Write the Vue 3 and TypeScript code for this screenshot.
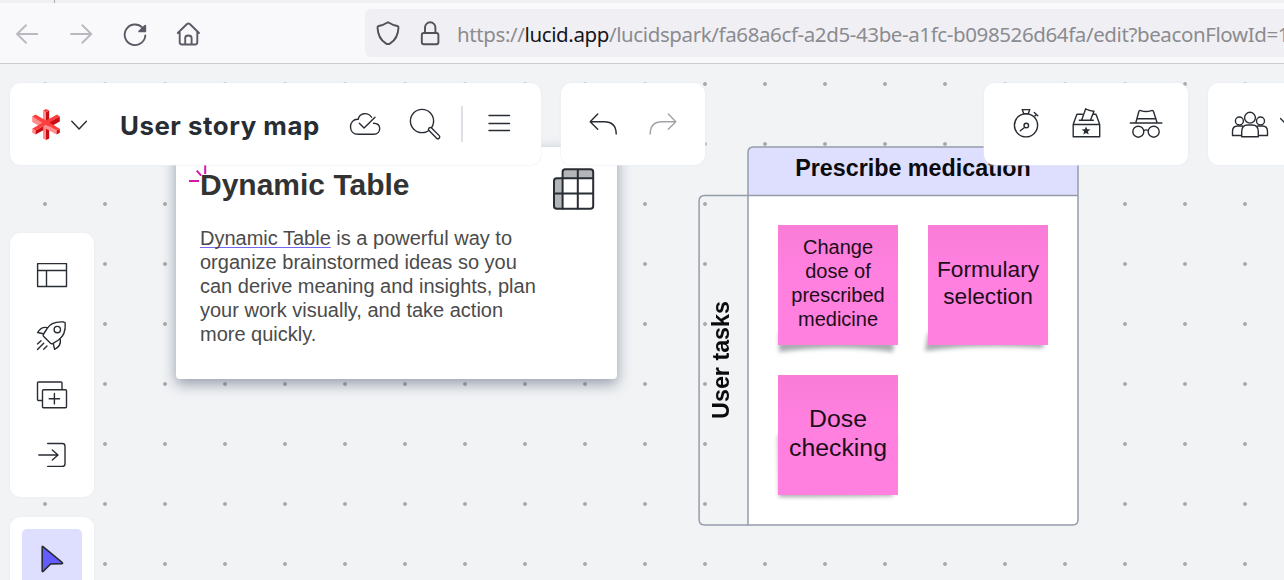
<script setup lang="ts">
interface Sticky {
  lines: string[]
  variant: string
}

const stickies: Sticky[] = [
  { lines: ['Change', 'dose of', 'prescribed', 'medicine'], variant: 'small' },
  { lines: ['Formulary', 'selection'], variant: 'medium' },
  { lines: ['Dose', 'checking'], variant: 'large' },
]

const shadows: string[] = [
  'M1 108 H117 L115 127 Q60 119 1 127 Z',
  'M0 108 H118 L115 123 Q50 119 -3 126 Z',
  'M0 60 H118 L115 121 Q60 122 1 122 Z',
]

const cardLines: string[] = [
  'organize brainstormed ideas so you',
  'can derive meaning and insights, plan',
  'your work visually, and take action',
  'more quickly.',
]
</script>

<template>
  <div class="window">
    <div class="tabstrip"><span class="tab-edge"></span></div>
    <header class="browser">
      <svg class="nav" width="365" height="60" viewBox="0 3 365 60">
        <g class="muted">
          <path d="M37.3 34H17M26 25.2L17 34l9 8.8" />
          <path d="M71 34h20.3M82.3 25.2L91.3 34l-9 8.8" />
        </g>
        <g class="chrome">
          <path d="M145.3 35.5A10.3 10.3 0 1 1 142.4 27.6" />
          <path class="solid" d="M145.2 25.8v5.6h-6z" />
          <path d="M177.8 33L187 24q1.4-1.2 2.8 0l9.2 9M179.7 32v10.3q0 2.2 2.2 2.2h13.2q2.2 0 2.2-2.2V32M185.2 44v-6q0-2.5 3.2-2.5t3.2 2.5v6" />
        </g>
      </svg>
      <div class="address">
        <svg width="92" height="48" viewBox="365 9 92 48" class="chrome dark">
          <path d="M388 22.3q4.8 3 9.4 3.7q1.2.3 1.1 1.6c-.4 8-2.7 12.300-8.300 15.800q-2.200 1.400-4.400 0c-5.600-3.500-7.900-7.800-8.300-15.800q-.1-1.300 1.100-1.600q4.600-.7 9.400-3.700z" />
          <rect x="421.800" y="33" width="16.600" height="11.300" rx="2" />
          <path d="M425 33v-5.500a5.200 5.200 0 0 1 10.400 0V33" />
        </svg>
        <span class="url">https://<b>lucid.app</b>/lucidspark/fa68a6cf-a2d5-43be-a1fc-b098526d64fa/edit?beaconFlowId=1</span>
      </div>
    </header>

    <main class="canvas">
      <section class="card">
        <h2>Dynamic Table</h2>
        <p><span class="link">Dynamic Table</span> is a powerful way to<template v-for="line in cardLines" :key="line"><br />{{ line }}</template></p>
        <svg class="grid-icon" width="44" height="44" viewBox="552 167 44 44">
          <path class="shade" d="M563 178v-6q0-2.500 2.500-2.500h25q2.500 0 2.500 2.500v6zM563 178h-6q-2.800 0-2.800 2.500v25.500q0 3 2.800 3h6z" />
          <path d="M562.600 178.200v-6.200q0-2.700 2.700-2.700h25.200q2.700 0 2.700 2.700v34q0 2.800-2.700 2.800h-33.700q-2.800 0-2.800-2.800v-25q0-2.800 2.800-2.800h36.400M554 193.400h39.200M562.600 178v31M577.800 169.300v39.700" />
        </svg>
        <svg class="spark" width="20" height="20" viewBox="188 164 20 20">
          <path d="M205.200 164v10M196.700 170.700l4.500 5M189 181h10" />
        </svg>
      </section>

      <section class="board">
        <svg class="frame" width="382" height="381" viewBox="698 146 382 381">
          <path class="head-fill" d="M748 195.500v-43q0-5.500 5.500-5.500h319q5.500 0 5.500 5.500v43z" />
          <path class="body-fill" d="M748 195.500h330v324q0 5.500-5.500 5.500H748z" />
          <path d="M748 525V152.500q0-5.500 5.500-5.500h319q5.500 0 5.500 5.500v367q0 5.500-5.500 5.500H704.600q-5.500 0-5.500-5.500v-318.500q0-5.500 5.500-5.500H1078" />
        </svg>
        <h3>Prescribe medication</h3>
        <div class="row-label"><span>User tasks</span></div>
        <div class="notes">
          <article v-for="(note, i) in stickies" :key="i" class="note" :class="note.variant">
            <svg class="curl" width="120" height="120" viewBox="0 0 120 120"><path :d="shadows[i]" /></svg>
            <div class="paper"><span v-for="line in note.lines" :key="line">{{ line }}</span></div>
          </article>
        </div>
      </section>

      <nav class="panel document">
        <svg class="logo" width="32" height="60" viewBox="30 95 32 60">
          <path fill="#ff8f8f" d="M43 110.500l3 1.700V124l-3-1.700zM43 124l3-1.500v17.500l-3-1.500zM32.200 116.500l11.300 6.200v2.600l-3.300 1.300-8-4.600z" />
          <path fill="#c80d14" d="M46 112.200l3.200-1.700v12L46 124zM46 123l3.200 1.500v14L46 140zM48.500 122.200l11.300-5.700v5l-7.600 4.200-3.700-1.700z" />
          <path fill="#ff3f3f" d="M43 110.500l3-1.600 3.200 1.600-3.200 1.700zM32.200 116.500l3.300-1.900L46 120.400l-2.500 3zM57 114.600l2.800 1.900-10.500 6.200-3.300-2.300z" />
          <path fill="#ff8f8f" d="M32.200 128.800l3.300 1.800v4l-3.300-1.800zM46 124.600l10.600 5.800v4.200L46 128.800z" />
          <path fill="#c80d14" d="M35.500 130.600L46 124.600v4.200l-10.500 5.800zM56.600 130.400l3.200-1.600v4l-3.200 1.800z" />
          <path fill="#ff8f8f" d="M43.300 130.200l2.700-1.500v-4.100l-2.700 1.600z" />
          <path fill="#ff3f3f" d="M32.200 128.800L46 120.500l13.800 8.300-3.200 1.700L46 124.600l-10.500 6z" />
        </svg>
        <svg width="36" height="60" viewBox="62 95 36 60" class="ink"><path d="M71.800 121.300l7.300 7.700 7.300-7.700" /></svg>
        <h1>User story map</h1>
        <svg width="60" height="60" viewBox="335 95 60 60" class="ink">
          <path d="M371.500 117.200C367.500 111.600 359.500 113 358.200 119.300C353.300 119 350.500 122.700 350.500 126.700C350.500 131.200 353.500 134.200 358 134.200H373.800C377.500 134.200 379.700 131.500 379.700 128.500C379.700 125.200 377.200 123.200 373.500 123.200M359.300 123.300l4.800 4.800L375 117.300" />
        </svg>
        <svg width="60" height="60" viewBox="395 95 60 60" class="ink">
          <circle cx="422" cy="121" r="11.600" />
          <path d="M430.300 129.300L437.900 136.900" stroke-width="5" class="handle" /><path d="M430.300 129.300L437.900 136.900" class="hollow" />
        </svg>
        <span class="divider"></span>
        <svg width="60" height="60" viewBox="469 95 60 60" class="ink"><path d="M489 115.500h20.500M489 123.500h20.500M489 130.500h20.500" /></svg>
      </nav>

      <nav class="panel history">
        <svg width="60" height="60" viewBox="573 95 60 60" class="ink"><path d="M597.700 114l-7.500 7.700 7.500 7.600M590.200 121.700H604C611.500 121.700 616.200 125 616.200 134" /></svg>
        <svg width="60" height="60" viewBox="633 95 60 60" class="ink faded"><path d="M668.300 114l7.500 7.700-7.500 7.600M675.800 121.700H662C654.500 121.700 650.200 125 650.200 134" /></svg>
      </nav>

      <nav class="panel facilitate">
        <svg width="60" height="60" viewBox="996 95 60 60" class="ink">
          <circle cx="1026" cy="125.300" r="11.600" /><circle cx="1026.300" cy="125.500" r="2.300" />
          <path d="M1024.500 127.500l-4.200 3.300M1022.200 109.600h7.600l-1.500 4h-4.600zM1034.300 112.500l3.500 3.300M1036.400 114.200l-1.500 1.800" />
        </svg>
        <svg width="60" height="60" viewBox="1056 95 60 60" class="ink">
          <path d="M1073.200 124.500h26.500v12.300h-26.500zM1073.200 124.500l3.300-9.300q.3-1 1.300-1h4.500M1099.700 124.500l-3.300-9.300q-.3-1-1.300-1h-1.600M1079.300 120.300h14M1081.600 120.300l4.100-11.500q2 1.600 8.300 2.500l-3.600 9" />
          <path class="star" d="M1086 126.400l1.200 2.900 3.200.2-2.500 2 .8 3.100-2.700-1.700-2.700 1.700.8-3.100-2.500-2 3.200-.2z" />
        </svg>
        <svg width="60" height="60" viewBox="1116 95 60 60" class="ink">
          <path d="M1130.300 123h31.500M1135.800 122.800l3-11q.4-1.600 2-1.200q5.200 1.900 10.600 0q1.700-.5 2.200 1.200l3.500 11M1137.300 118.700h18.700M1143.800 130.500q2.200-1.200 4.400 0" />
          <circle cx="1138.300" cy="131.700" r="5.500" /><circle cx="1153.700" cy="131.700" r="5.500" />
        </svg>
      </nav>

      <nav class="panel people">
        <svg width="60" height="60" viewBox="1220 95 60 60" class="ink">
          <circle cx="1250" cy="117.700" r="5.400" /><circle cx="1239.400" cy="121" r="4" /><circle cx="1260.500" cy="121" r="4" />
          <path d="M1241.700 136.800v-5.300q0-6.500 6-6.500h4.600q6 0 6 6.500v5.300zM1241.700 135.500h-9.200v-4q0-5.500 5-5.500h4.700M1258.300 135.500h9.200v-4q0-5.500-5-5.500h-4.700" />
        </svg>
        <svg width="16" height="60" viewBox="1280 95 16 60" class="ink"><path d="M1280.500 118.500l7 7 7-7" /></svg>
      </nav>

      <nav class="panel side">
        <svg width="60" height="60" viewBox="22 245 60 60" class="ink"><path d="M37.600 263.600h28.900v22.900H37.600zM37.600 270.500h28.900M46.500 270.500v16" /></svg>
        <svg width="60" height="60" viewBox="22 305 60 60" class="ink">
          <path d="M64 322C56 321.400 49.500 324 46.800 329L43.300 334.500Q42.800 335.600 43.700 336.500L50.300 343Q51.400 344.200 52.700 343.600L58.500 340C63.600 336.500 65.700 330 65.200 323Q65.100 322 64 322ZM47.500 327.700C42.500 326.300 39.800 329 37.600 332.500L43.300 333.700M53.300 343.700L54.600 349.300C58.800 347.300 61 343.500 60.300 339M41 340.700l-3.500 3.200M43.700 343.300l-6.200 6.200M47 346l-3.300 3.300" />
          <circle cx="57.300" cy="329.600" r="3.200" />
        </svg>
        <svg width="60" height="60" viewBox="22 365 60 60" class="ink"><path d="M42 400.500h-3.500q-1 0-1-1v-16.500q0-1 1-1h22.500q1 0 1 1v6.500M43.500 389.700h22q1 0 1 1v16q0 1-1 1h-22q-1 0-1-1v-16q0-1 1-1zM54.400 393.500v10.400M49.200 398.700h10.400" /></svg>
        <svg width="60" height="60" viewBox="22 425 60 60" class="ink"><path d="M47.700 443.500h14.600q2.700 0 2.700 2.700v17.500q0 2.700-2.700 2.700H47.700M38.800 455H58M52.300 450l5.700 5-5.700 5" /></svg>
      </nav>

      <nav class="panel tools">
        <div class="active">
          <svg width="60" height="60" viewBox="22 529 60 60"><path class="pointer" d="M42.200 547q0-1 .8-.4L62.300 562.700q.8.800-.3.900L50.600 564l-7.500 7.400q-.9.600-.9-.5z" /></svg>
        </div>
      </nav>
    </main>
  </div>
</template>

<style>
html, body { overflow: hidden; }
</style>

<style scoped>
.window {
  width: 1284px; height: 580px; overflow: hidden; display: flex; flex-direction: column;
  font-family: "Liberation Sans", Arial, sans-serif;
}
.window * { box-sizing: border-box; }
svg { display: block; flex: none; fill: none; stroke-linecap: round; stroke-linejoin: round; }
h1, h2, h3, p { margin: 0; }
.tabstrip { height: 3px; flex: none; background: #f0f0f0; }
.tab-edge { display: block; width: 1px; height: 3px; margin-left: 54px; background: #aaa; }
.browser { height: 61px; flex: none; display: flex; background: #f9f9fb; border-bottom: 1px solid #ccccce; }
.chrome { stroke: #5b5b66; stroke-width: 1.9; }
.chrome.dark { stroke: #505058; }
.chrome .solid { fill: #5b5b66; }
.muted { stroke: #b9b9c0; stroke-width: 1.9; }
.address { flex: 1; min-width: 0; height: 48px; margin-top: 6px; display: flex; background: #f0f0f4; border-radius: 6px 0 0 6px; overflow: hidden; }
.url { font: 20.500px/50px "Noto Sans", "Open Sans", sans-serif; white-space: nowrap; color: #8b8b90; letter-spacing: -0.390px; }
.url b { font-weight: 400; color: #15141a; }
.canvas {
  flex: 1; position: relative; overflow: hidden; background-color: #f1f3f5;
  background-image: radial-gradient(circle at 30px 30px, #a9abae 1.500px, transparent 2.300px);
  background-size: 60px 60px; background-position: 15px -10px;
}
.card {
  position: absolute; left: 176px; top: 83px; width: 441px; height: 232px; padding: 20px 24px;
  background: #fff; border-radius: 4px; box-shadow: 0 5px 14px rgba(60, 72, 98, .5);
}
.card h2 { font-size: 30px; line-height: 36px; color: #333; white-space: nowrap; }
.card p { margin-top: 23px; font-size: 20px; line-height: 24px; color: #4b4b4b; white-space: nowrap; }
.link { text-decoration: underline 1px #7468f0; text-underline-offset: 2px; text-decoration-skip-ink: none; }
.grid-icon { position: absolute; left: 376px; top: 20px; stroke: #282c33; stroke-width: 2; }
.grid-icon .shade { fill: #b4b5b8; stroke: none; }
.spark { position: absolute; left: 12px; top: 17px; stroke: #d916a8; stroke-width: 2; stroke-linecap: butt; }
.board { position: absolute; left: 698px; top: 82px; width: 382px; height: 381px; }
.frame { position: absolute; inset: 0; stroke: #959dab; stroke-width: 1.500; }
.frame .head-fill { fill: #dedeff; stroke: none; }
.frame .body-fill { fill: #fff; stroke: none; }
.board h3 { position: relative; margin-left: 48px; height: 49px; font-size: 23.300px; line-height: 44px; text-align: center; color: #0b0b0d; }
.row-label { position: absolute; left: 0; top: 49px; width: 46px; height: 330px; display: flex; align-items: center; justify-content: center; }
.row-label span { writing-mode: vertical-rl; transform: rotate(180deg); font-size: 23.300px; line-height: 28px; font-weight: 700; color: #0b0b0d; }
.notes { position: relative; margin: 30px 0 0 80px; display: grid; grid-template-columns: 120px 120px; gap: 30px; }
.note { position: relative; height: 120px; text-align: center; color: #1d0d19; }
.curl { position: absolute; left: 0; top: 0; overflow: visible; fill: rgba(50, 55, 65, .42); filter: blur(2px); }
.paper {
  position: relative; height: 120px; display: flex; flex-direction: column; justify-content: center;
  background: linear-gradient(#f97cd7, #ff80df 38%);
}
.small { font-size: 20px; line-height: 24px; }
.medium { font-size: 22.700px; line-height: 27px; }
.large { font-size: 24.800px; line-height: 29.300px; }
.small .paper { padding-bottom: 4px; }
.medium .paper { padding-bottom: 4px; }
.large .paper { padding-bottom: 4px; }
.panel { position: absolute; top: 19px; height: 82px; padding: 12px; display: flex; background: #fff; border-radius: 11px; box-shadow: 0 0 1px 1px rgba(236, 238, 241, .5); }
.document { left: 10px; width: 531px; padding-left: 20px; }
.history { left: 561px; width: 144px; }
.facilitate { left: 984px; width: 204px; }
.people { left: 1208px; width: 110px; }
.side { left: 10px; top: 169px; width: 84px; height: 264px; flex-direction: column; }
.tools { left: 10px; top: 453px; width: 84px; height: 140px; }
.document h1 { width: 215px; margin-left: 22px; font: 700 25.800px/62px Inter, "DejaVu Sans", sans-serif; letter-spacing: .550px; color: #282c33; white-space: nowrap; }
.divider { width: 2px; height: 36px; margin: 11px 6px; background: #dce0e6; }
.ink { stroke: #282c33; stroke-width: 1.400; }
.faded { stroke: #a2a3a8; }
.hollow { stroke: #fff; stroke-width: 2.200; }
.star { fill: #282c33; stroke: none; }
.active { width: 60px; height: 60px; background: #dedeff; border-radius: 5px; }
.pointer { fill: #635dff; stroke: #282c33; stroke-width: 1.600; }
</style>
